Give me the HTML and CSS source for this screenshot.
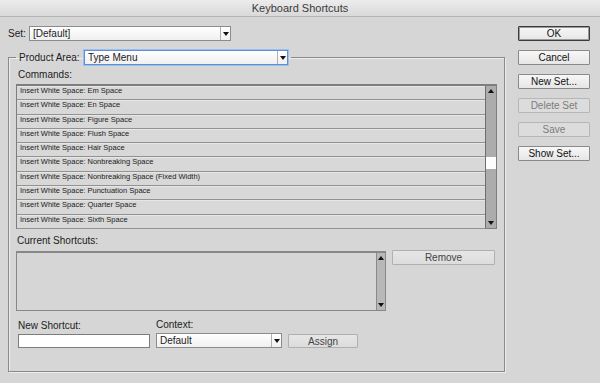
FILE: index.html
```html
<!DOCTYPE html>
<html lang="en">
<head>
    <meta charset="UTF-8">
    <meta name="viewport" content="width=device-width, initial-scale=1.0">
    <title>Keyboard Shortcuts</title>
    <link rel="stylesheet" href="styles.css">
</head>
<body>
    <div class="titlebar">Keyboard Shortcuts</div>

    <div class="dialog">
        <div class="main">
            <div class="set-row">
                <span class="set-label">Set:</span>
                <div class="select set-select">
                    <span class="select-value">[Default]</span>
                    <span class="select-arrow"></span>
                </div>
            </div>

            <fieldset class="group">
                <legend class="group-legend">
                    <span class="legend-label">Product Area:</span>
                    <div class="select area-select focused">
                        <span class="select-value">Type Menu</span>
                        <span class="select-arrow"></span>
                    </div>
                </legend>

                <div class="label commands-label">Commands:</div>
                <div class="list">
                    <div class="rows">
                        <div class="row">Insert White Space: Em Space</div>
                        <div class="row">Insert White Space: En Space</div>
                        <div class="row">Insert White Space: Figure Space</div>
                        <div class="row">Insert White Space: Flush Space</div>
                        <div class="row">Insert White Space: Hair Space</div>
                        <div class="row">Insert White Space: Nonbreaking Space</div>
                        <div class="row">Insert White Space: Nonbreaking Space (Fixed Width)</div>
                        <div class="row">Insert White Space: Punctuation Space</div>
                        <div class="row">Insert White Space: Quarter Space</div>
                        <div class="row">Insert White Space: Sixth Space</div>
                    </div>
                    <div class="scrollbar">
                        <span class="arrow-up"></span>
                        <span class="thumb"></span>
                        <span class="arrow-down"></span>
                    </div>
                </div>

                <div class="label current-label">Current Shortcuts:</div>
                <div class="current-row">
                    <div class="shortcut-box">
                        <div class="shortcut-area"></div>
                        <div class="scrollbar small">
                            <span class="arrow-up"></span>
                            <span class="arrow-down"></span>
                        </div>
                    </div>
                    <button class="btn dim remove-btn">Remove</button>
                </div>

                <div class="new-row">
                    <div class="field shortcut-field">
                        <div class="label">New Shortcut:</div>
                        <div class="text-input"></div>
                    </div>
                    <div class="field context-field">
                        <div class="label">Context:</div>
                        <div class="select context-select">
                            <span class="select-value">Default</span>
                            <span class="select-arrow"></span>
                        </div>
                    </div>
                    <button class="btn dim assign-btn">Assign</button>
                </div>
            </fieldset>
        </div>

        <div class="side">
            <button class="btn default">OK</button>
            <button class="btn">Cancel</button>
            <button class="btn">New Set...</button>
            <button class="btn disabled">Delete Set</button>
            <button class="btn disabled">Save</button>
            <button class="btn">Show Set...</button>
        </div>
    </div>
</body>
</html>
```

FILE: styles.css
```css
body {
    margin: 0;
    background-color: #d6d6d6;
    font-family: 'Liberation Sans', Arial, sans-serif;
    color: #1c1c1c;
    width: 600px;
    height: 383px;
    overflow: hidden;
}

.titlebar {
    height: 16px;
    line-height: 17px;
    text-align: center;
    font-size: 11px;
    color: #3a3a3a;
    background: linear-gradient(#ececec, #d9d9d9);
    border-bottom: 1px solid #b4b4b4;
}

.dialog {
    display: flex;
    padding: 9px 0 0 8px;
}

.main {
    width: 497px;
}

.set-row {
    display: flex;
    align-items: center;
    height: 15px;
}

.set-label {
    width: 21px;
    font-size: 10px;
}

/* dropdowns */
.select {
    position: relative;
    box-sizing: border-box;
    height: 15px;
    background: linear-gradient(#ffffff, #f0f0f0);
    border: 1px solid #8c8c8c;
    font-size: 10px;
    line-height: 13px;
    padding-left: 3px;
}

.select-arrow {
    position: absolute;
    top: 0;
    right: 0;
    width: 9px;
    height: 13px;
    border-left: 1px solid #b0b0b0;
}

.select-arrow::after {
    content: '';
    position: absolute;
    left: 2px;
    top: 5px;
    border-left: 3px solid transparent;
    border-right: 3px solid transparent;
    border-top: 4px solid #111;
}

.set-select {
    width: 202px;
}

.area-select {
    width: 204px;
}

.focused {
    border-color: #5c8fd6;
    box-shadow: 0 0 0 1px #9cbfec;
}

.context-select {
    width: 126px;
}

/* group box */
.group {
    margin: 9px 0 0 0;
    padding: 0 7px 23px 7px;
    border: 1px solid #8a8a8a;
    box-shadow: inset 1px 1px 0 #ececec, 1px 1px 0 #ececec;
    width: 497px;
    box-sizing: border-box;
}

.group-legend {
    display: flex;
    align-items: center;
    padding: 0 3px;
}

.legend-label {
    font-size: 10px;
    width: 65px;
}

.label {
    font-size: 10px;
    height: 12px;
    line-height: 12px;
}

.commands-label {
    margin: 4px 0 3px 2px;
}

/* commands list */
.list {
    display: flex;
    box-sizing: border-box;
    height: 145px;
    border: 1px solid #7e7e7e;
    border-top-width: 2px;
    background-color: #d8d8d8;
}

.rows {
    flex: 1;
}

.row {
    box-sizing: border-box;
    height: 14.3px;
    line-height: 10px;
    padding-left: 3px;
    font-size: 7.5px;
    color: #222;
    border-bottom: 1px solid #929292;
    box-shadow: inset 0 1px 0 #e6e6e6;
}

.scrollbar {
    position: relative;
    width: 10px;
    background-color: #acacac;
    border-left: 1px solid #6e6e6e;
}

.arrow-up,
.arrow-down {
    position: absolute;
    left: 2px;
    border-left: 3px solid transparent;
    border-right: 3px solid transparent;
}

.arrow-up {
    top: 3px;
    border-bottom: 4px solid #111;
}

.arrow-down {
    bottom: 3px;
    border-top: 4px solid #111;
}

.thumb {
    position: absolute;
    left: 0;
    top: 71px;
    width: 10px;
    height: 12px;
    background-color: #fdfdfd;
}

.current-label {
    margin: 6px 0 4px 1px;
}

.current-row {
    display: flex;
    align-items: flex-start;
}

.shortcut-box {
    display: flex;
    box-sizing: border-box;
    width: 370px;
    height: 60px;
    border: 1px solid #888;
    border-top-width: 2px;
    background-color: #d6d6d6;
}

.shortcut-area {
    flex: 1;
}

.scrollbar.small {
    width: 8px;
    background-color: #b8b8b8;
    border-left-color: #8a8a8a;
}

.scrollbar.small .arrow-up,
.scrollbar.small .arrow-down {
    left: 1px;
}

/* buttons */
.btn {
    box-sizing: border-box;
    height: 15px;
    padding: 0;
    font-family: 'Liberation Sans', Arial, sans-serif;
    font-size: 10px;
    color: #111;
    background: linear-gradient(#f7f7f7, #e6e6e6);
    border: 1px solid #8a8a8a;
    border-radius: 1px;
}

.btn.default {
    border: 1px solid #3c3c3c;
    box-shadow: inset 0 0 0 1px #9a9a9a;
}

.btn.disabled {
    color: #7c7c7c;
    background: #dcdcdc;
    border-color: #b6b6b6;
}

.btn.dim {
    color: #444;
    background: linear-gradient(#e6e6e6, #dcdcdc);
    border-color: #b0b0b0;
}

.remove-btn {
    width: 103px;
    margin: -1px 0 0 6px;
}

.new-row {
    display: flex;
    align-items: flex-end;
    margin-top: 8px;
}

.field .label {
    margin-bottom: 2px;
}

.shortcut-field {
    margin-left: 2px;
}

.text-input {
    box-sizing: border-box;
    width: 132px;
    height: 14px;
    background-color: #fff;
    border: 1px solid #7c7c7c;
}

.context-field {
    margin-left: 6px;
}

.assign-btn {
    width: 70px;
    height: 14px;
    margin-left: 6px;
}

.side {
    display: flex;
    flex-direction: column;
    gap: 9px;
    margin-left: 13px;
    width: 72px;
}
```
